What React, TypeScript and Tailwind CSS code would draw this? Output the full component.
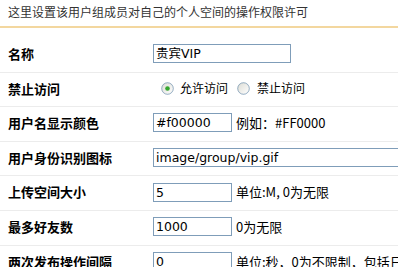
import type { ReactNode } from 'react';

const cjk = '"Noto Sans CJK SC", "DejaVu Sans", sans-serif';
const inputFont = '"DejaVu Sans", "Noto Sans CJK SC", sans-serif';

function Radio({ checked = false }: { checked?: boolean }) {
  return (
    <svg width="13" height="13" viewBox="0 0 13 13" className="shrink-0">
      <defs>
        <linearGradient id={checked ? 'rg1' : 'rg2'} x1="0" y1="0" x2="1" y2="1">
          <stop offset="0" stopColor="#dcdcd5" />
          <stop offset="1" stopColor="#ffffff" />
        </linearGradient>
      </defs>
      <circle cx="6.5" cy="6.5" r="5.8" fill={`url(#${checked ? 'rg1' : 'rg2'})`} stroke="#1c5180" strokeOpacity="0.45" strokeWidth="1" />
      {checked && <circle cx="6.5" cy="6.5" r="2.3" fill="#35a62e" />}
    </svg>
  );
}

function TextBox({ value, width }: { value: string; width: string }) {
  return (
    <div
      className={`${width} h-[19px] shrink-0 border border-[#7f9db9] bg-white pl-[2px] flex items-end pb-[1px] text-[12.5px] leading-[15px] text-black whitespace-nowrap overflow-hidden`}
      style={{ fontFamily: inputFont }}
    >
      {value}
    </div>
  );
}

function Row({ label, children }: { label: string; children: ReactNode }) {
  return (
    <div className="flex items-center h-[34.6px] pb-[2px] border-b border-[#ececec]">
      <div className="w-[153px] shrink-0 pl-[8px] text-[13px] font-bold text-black">{label}</div>
      <div className="flex items-center whitespace-nowrap text-[13px] text-black">{children}</div>
    </div>
  );
}

export default function App() {
  return (
    <div className="w-[398px] h-[267px] overflow-hidden bg-white" style={{ fontFamily: cjk }}>
      <div className="pt-[4px] pb-[6px] pl-[8px] text-[12px] leading-[16px] text-[#333] border-b-2 border-[#f3d79f]">
        这里设置该用户组成员对自己的个人空间的操作权限许可
      </div>
      <div className="mt-[10px]">
        <Row label="名称">
          <TextBox value="贵宾VIP" width="w-[138px]" />
        </Row>
        <Row label="禁止访问">
          <div className="flex items-center pl-[8px] text-[12px]">
            <Radio checked />
            <span className="ml-[6px]">允许访问</span>
            <span className="ml-[9px] flex"><Radio /></span>
            <span className="ml-[7px]">禁止访问</span>
          </div>
        </Row>
        <Row label="用户名显示颜色">
          <TextBox value="#f00000" width="w-[79px]" />
          <span className="ml-[4px]">例如：#FF0000</span>
        </Row>
        <Row label="用户身份识别图标">
          <TextBox value="image/group/vip.gif" width="w-[300px]" />
        </Row>
        <Row label="上传空间大小">
          <TextBox value="5" width="w-[79px]" />
          <span className="ml-[4px]">单位:M, 0为无限</span>
        </Row>
        <Row label="最多好友数">
          <TextBox value="1000" width="w-[79px]" />
          <span className="ml-[4px]">0为无限</span>
        </Row>
        <Row label="两次发布操作间隔">
          <TextBox value="0" width="w-[79px]" />
          <span className="ml-[4px]">单位:秒，0为不限制，包括日志</span>
        </Row>
      </div>
    </div>
  );
}
